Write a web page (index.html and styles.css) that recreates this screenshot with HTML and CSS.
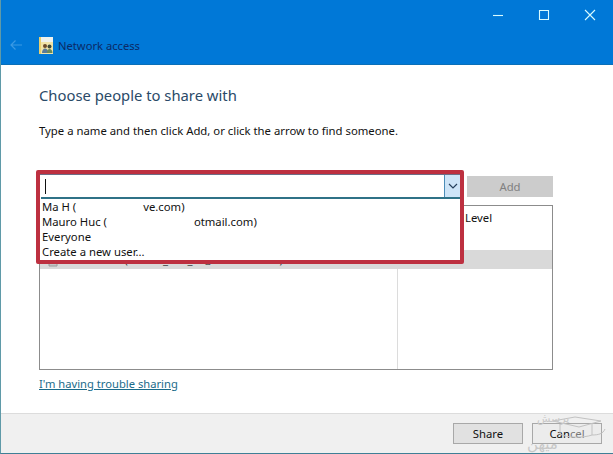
FILE: index.html
```html
<!DOCTYPE html>
<html lang="en">
<head>
<meta charset="utf-8">
<title>Network access</title>
<link rel="stylesheet" href="styles.css">
</head>
<body>
<div class="window">
  <header class="titlebar">
    <div class="controls">
      <svg class="ctl" width="12" height="12" viewBox="0 0 12 12"><path d="M1 6.500h10" /></svg>
      <svg class="ctl" width="12" height="12" viewBox="0 0 12 12"><path d="M1.500 1.500h9v9h-9z" /></svg>
      <svg class="ctl" width="12" height="12" viewBox="0 0 12 12"><path d="M1 1l10 10M11 1L1 11" /></svg>
    </div>
    <div class="nav">
      <svg class="back" width="14" height="12" viewBox="0 0 14 12"><path d="M13 6H2M6.500 1.500L2 6l4.500 4.500" /></svg>
      <svg class="appicon" width="14" height="17" viewBox="0 0 14 17">
        <path d="M0 0h14v17H0z" fill="#f1e4a8"/>
        <path d="M0 0h14v5H0z" fill="#eef2ee"/>
        <path d="M0 0h2v17H0z" fill="#e8d070"/>
        <circle cx="6" cy="9" r="2" fill="#6b4a2a"/>
        <circle cx="10.500" cy="9.500" r="2" fill="#3f4a3a"/>
        <path d="M3 16c0-3 1.500-4.500 3-4.500s2.500 1 3 2.500v2z" fill="#5a7a98"/>
        <path d="M8 16c0-2.500 1-4 2.500-4s3 1.500 3 4z" fill="#6a8a5a"/>
      </svg>
      <span class="apptitle">Network access</span>
    </div>
  </header>
  <main class="content">
    <h1 class="heading">Choose people to share with</h1>
    <p class="hint">Type a name and then click Add, or click the arrow to find someone.</p>
    <div class="addrow">
      <div class="combo">
        <span class="caret"></span>
        <span class="dropbtn">
          <svg width="10" height="6" viewBox="0 0 10 6"><path d="M1 1l4 4 4-4" /></svg>
        </span>
      </div>
      <div class="addbtn">Add</div>
    </div>
    <div class="listbox">
      <div class="listhead">
        <span class="col-name"></span>
        <span class="col-level">Level</span>
      </div>
      <div class="listrow">
        <span class="col-name">
          <svg class="rowicon" width="10" height="14" viewBox="0 0 10 14"><path d="M1 1h8v12H1z" /></svg>
          <span class="rowtext">Mauro Huc (mauro_huc_m@outlook.com)</span>
        </span>
      </div>
      <div class="listrest"><span class="col-name"></span><span class="col-level"></span></div>
    </div>
    <a class="trouble" href="#">I'm having trouble sharing</a>
    <div class="popup">
      <div class="popup-spacer"></div>
      <ul class="suggest">
        <li>Ma H (<span class="redact r1"></span>ve.com)</li>
        <li>Mauro Huc (<span class="redact r2"></span>otmail.com)</li>
        <li>Everyone</li>
        <li>Create a new user...</li>
      </ul>
    </div>
  </main>
  <footer class="footer">
    <button class="btn">Share</button>
    <button class="btn btn-cancel">Can<span class="faded">cel</span></button>
  </footer>
  <svg class="watermark" width="93" height="44" viewBox="0 0 93 44">
    <path d="M33 12l22-4 26 4-22 6z" />
    <path d="M40 15v10c6 4 24 4 32 1V15" />
    <path d="M72 26c6 0 11-1 13-6" />
    <text class="wm-text wm-top" x="17" y="13">پرسش</text>
    <text class="wm-text wm-bottom" x="7" y="40">میهن</text>
  </svg>
</div>
</body>
</html>
```
FILE: styles.css
```css
* { box-sizing: border-box; }
html, body { margin: 0; padding: 0; }
body { width: 613px; height: 454px; overflow: hidden; background: #fff; font-family: "Noto Sans", "Open Sans", sans-serif; color: #111; }
.window { position: relative; width: 613px; height: 454px; display: flex; flex-direction: column; border-left: 1px solid #5f9aa8; border-bottom: 1px solid #3f7f96; }

.titlebar { height: 65px; flex: none; background: #0078d7; border-bottom: 1px solid #0a6fb8; display: flex; flex-direction: column; }
.controls { height: 30px; display: flex; justify-content: flex-end; align-items: flex-start; gap: 34px; padding: 9px 17px 0 0; }
.ctl path { fill: none; stroke: #d8fbff; stroke-width: 1.100; }
.nav { display: flex; align-items: center; height: 30px; padding: 0 0 0 8px; }
.back { margin-right: 16px; }
.back path { fill: none; stroke: #3b9ae4; stroke-width: 1.200; }
.appicon { margin-right: 5px; }
.apptitle { font-size: 11.200px; color: #0b2a66; }

.content { position: relative; flex: 1; padding: 0 60px 0 38px; }
.heading { margin: 20px 0 0; font-size: 14.800px; line-height: 20px; font-weight: 400; color: #2a4a68; white-space: nowrap; }
.hint { margin: 18px 0 0; font-size: 11.340px; line-height: 16px; color: #111; white-space: nowrap; }

.addrow { margin-top: 37px; height: 22px; display: flex; justify-content: space-between; }
.combo { width: 419px; height: 24px; margin: -1px 0 0 2px; border-bottom: 2px solid #2f7287; background: #fff; display: flex; align-items: center; justify-content: space-between; }
.caret { width: 1px; height: 15px; background: #111; margin-left: 4px; }
.dropbtn { width: 16px; height: 22px; background: #cde4f7; border-left: 1px solid #4c8db8; display: flex; align-items: center; justify-content: center; }
.dropbtn path { fill: none; stroke: #26405c; stroke-width: 1.200; }
.addbtn { width: 86px; height: 21px; background: #cccccc; color: #808080; font-size: 11.300px; line-height: 21px; text-align: center; }

.listbox { margin-top: 7px; width: 514px; height: 165px; border: 1px solid #8c8c8c; display: flex; flex-direction: column; }
.listhead { height: 44px; flex: none; display: flex; }
.listrow { height: 19px; flex: none; background: #d9d9d9; display: flex; }
.listrest { flex: 1; display: flex; }
.col-name { width: 358px; flex: none; position: relative; display: flex; align-items: flex-start; }
.listrest .col-name { border-right: 1px solid #dcdcdc; }
.col-level { font-size: 11.300px; line-height: 16px; padding: 4px 0 0 67px; }
.rowicon { margin: 3px 0 0 8px; }
.rowicon path { fill: #c4c4c4; stroke: #9a9a9a; stroke-width: 1; }
.rowtext { font-size: 11.300px; line-height: 19px; margin-left: 5px; white-space: nowrap; color: #333; }

.trouble { display: inline-block; margin-top: 6px; font-size: 11.200px; line-height: 16px; color: #1a6b8a; text-decoration: underline; white-space: nowrap; }

.popup { position: absolute; left: 35px; top: 105px; width: 428px; height: 94px; border: 4px solid #bd3040; border-radius: 2px; display: flex; flex-direction: column; }
.popup-spacer { height: 25px; flex: none; border-top: 1px solid #6d6d85; }
.suggest { list-style: none; margin: 0; padding: 0 0 0 2px; flex: 1; background: #fff; }
.suggest li { font-size: 11.300px; line-height: 15px; height: 15px; color: #111; white-space: nowrap; }
.redact { display: inline-block; }
.r1 { width: 67px; }
.r2 { width: 87px; }

.footer { height: 40px; flex: none; background: #f0f0f0; border-top: 1px solid #dcdcdc; display: flex; justify-content: flex-end; align-items: center; gap: 9px; padding: 0 11px 1px 0; }
.btn { width: 70px; height: 21px; padding: 0; background: #e1e1e1; border: 1px solid #a8a8a8; font: 11.300px "Noto Sans", "Open Sans", sans-serif; color: #111; }
.btn-cancel { background: #ececec; }
.faded { color: #777; }

.watermark { position: absolute; right: 0; bottom: 0; pointer-events: none; }
.watermark path { fill: none; stroke: #c2c2c2; stroke-width: 1; }
.wm-text { font-family: "DejaVu Sans", sans-serif; fill: #c8c8c8; }
.wm-top { font-size: 11px; }
.wm-bottom { font-size: 15px; }
```
